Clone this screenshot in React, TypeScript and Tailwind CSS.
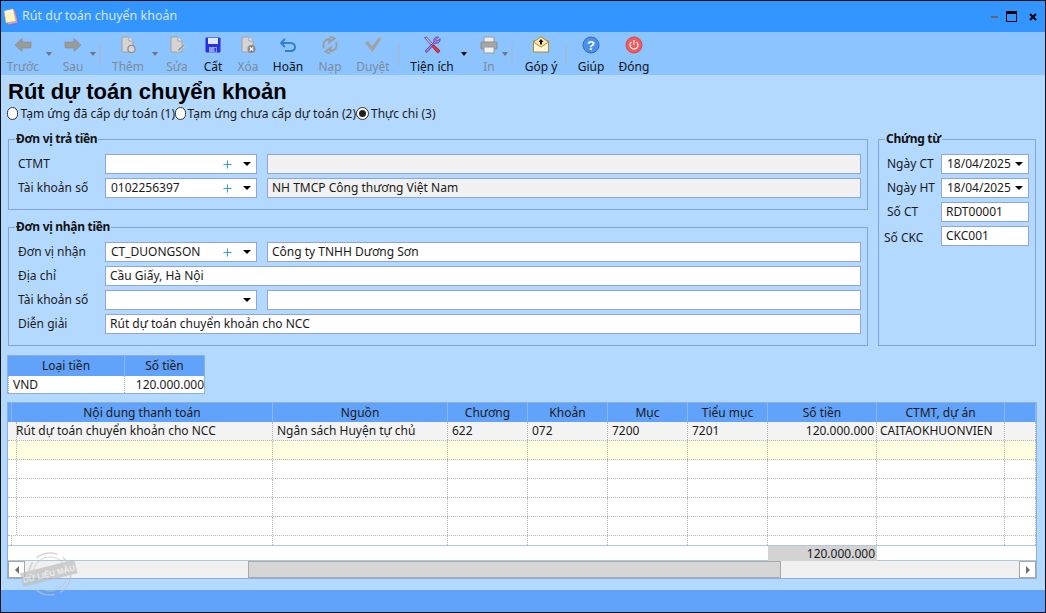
import type { ReactNode } from "react";

const inputBorder = "border border-[#8ea3e0]";

function ArrowIcon({ right }: { right?: boolean }) {
  return (
    <svg width="18" height="16" viewBox="0 0 18 16" className={right ? "-scale-x-100" : ""}>
      <path d="M1 8 L8 1.5 V5 H17 V11 H8 V14.5 Z" fill="#9a9a9a" stroke="#8a8a8a" strokeWidth="0.6" />
    </svg>
  );
}

function DocIcon({ badge }: { badge: "add" | "edit" | "del" }) {
  return (
    <svg width="18" height="18" viewBox="0 0 18 18">
      <path d="M3 1 H10 L14 5 V16 H3 Z" fill="#d4d4d4" stroke="#a0a0a0" />
      <path d="M10 1 V5 H14" fill="#f2f2f2" stroke="#a0a0a0" />
      {badge === "add" && <circle cx="12.5" cy="13" r="3.6" fill="#d9d9d9" stroke="#8f8f8f" strokeWidth="1.4" />}
      {badge === "edit" && <path d="M9 16 L10 13 L16 7.5 L17.5 9 L12 14.6 Z" fill="#9a9a9a" stroke="#f4f4f4" strokeWidth="0.5" />}
      {badge === "del" && (
        <g>
          <circle cx="12.5" cy="13" r="4" fill="#8a8a8a" />
          <path d="M10.8 11.3 L14.2 14.7 M14.2 11.3 L10.8 14.7" stroke="#fff" strokeWidth="1.2" />
        </g>
      )}
    </svg>
  );
}

function SaveIcon() {
  return (
    <svg width="16" height="16" viewBox="0 0 16 16">
      <rect x="0.5" y="0.5" width="15" height="15" rx="1" fill="#2a33d8" />
      <rect x="3" y="1" width="10" height="6" fill="#dfe6fb" />
      <rect x="4" y="10" width="8" height="5.5" fill="#8d9bf0" />
      <rect x="9.5" y="11" width="1.6" height="3.5" fill="#2a33d8" />
    </svg>
  );
}

function UndoIcon() {
  return (
    <svg width="18" height="16" viewBox="0 0 18 16" fill="none">
      <path d="M6 2 L2 6 L6 10" stroke="#2f7fd6" strokeWidth="1.8" />
      <path d="M2.5 6 H11.5 C14.5 6 16 8 16 10 C16 12.5 14 14 11.5 14 H6" stroke="#2f7fd6" strokeWidth="2" />
    </svg>
  );
}

function ReloadIcon() {
  return (
    <svg width="18" height="18" viewBox="0 0 18 18" fill="none">
      <path d="M3 12 C1 7 4 3 9 3 L8 6.5 L13.5 2.5 L8.5 0" stroke="#9c9c9c" strokeWidth="1.8" />
      <path d="M15 6 C17 11 14 15 9 15 L10 11.5 L4.5 15.5 L9.5 18" stroke="#9c9c9c" strokeWidth="1.8" />
    </svg>
  );
}

function CheckIcon() {
  return (
    <svg width="18" height="16" viewBox="0 0 18 16">
      <path d="M1 6 L4 4 L8 9 L15 0.5 L17.5 1.5 L8.5 15 Z" fill="#a2a2a2" />
    </svg>
  );
}

function ToolsIcon() {
  return (
    <svg width="18" height="18" viewBox="0 0 18 18">
      <path d="M2 15 L11 6 C10 3 12 0.5 15.5 1 L13 3.5 L14.5 5 L17 2.5 C17.5 6 15 8 12 7 L4 16.5 Z" fill="#a57be0" stroke="#5b3a9a" strokeWidth="0.8" />
      <path d="M1.5 1.5 L3.5 1 L9.5 7.5 L8 9 Z" fill="#c9b8ee" stroke="#5b3a9a" strokeWidth="0.8" />
      <path d="M9 10.5 L11 9 L16.5 14 C17.5 15.5 15.5 17.5 14 16.5 Z" fill="#e0343c" stroke="#8e1a20" strokeWidth="0.6" />
    </svg>
  );
}

function PrinterIcon() {
  return (
    <svg width="18" height="18" viewBox="0 0 18 18">
      <rect x="4" y="1" width="10" height="6" fill="#ececec" stroke="#9a9a9a" />
      <rect x="1" y="6" width="16" height="7" rx="1" fill="#a6a6a6" stroke="#8d8d8d" />
      <rect x="4" y="11" width="10" height="6" fill="#f1f1f1" stroke="#9a9a9a" />
    </svg>
  );
}

function MailIcon() {
  return (
    <svg width="18" height="18" viewBox="0 0 18 18">
      <rect x="1.5" y="5" width="15" height="11" fill="#fff6dc" stroke="#b08a2e" />
      <path d="M1.5 6 L9 0.8 L16.5 6 L9 11 Z" fill="#ffe9a8" stroke="#b08a2e" />
      <path d="M9 3 L11.5 6 H10 V8.5 H8 V6 H6.5 Z" fill="#111" />
    </svg>
  );
}

function HelpIcon() {
  return (
    <svg width="18" height="18" viewBox="0 0 18 18">
      <circle cx="9" cy="9" r="8" fill="#4a90e8" stroke="#2f6fc4" />
      <text x="9" y="13.5" textAnchor="middle" fontSize="13" fontWeight="700" fill="#fff" fontFamily="Liberation Sans, sans-serif">?</text>
    </svg>
  );
}

function PowerIcon() {
  return (
    <svg width="18" height="18" viewBox="0 0 18 18" fill="none">
      <circle cx="9" cy="9" r="8" fill="#ee5c5f" stroke="#d9474c" />
      <path d="M6.4 6 A4 4 0 1 0 11.6 6" stroke="#fff" strokeWidth="1.1" />
      <path d="M9 4 V9" stroke="#fff" strokeWidth="1.1" />
    </svg>
  );
}

function Tool({ label, icon, w, off }: { label: string; icon: ReactNode; w: string; off?: boolean }) {
  return (
    <div className={`flex flex-col items-center ${w}`}>
      <div className="flex h-[20px] items-center justify-center">{icon}</div>
      <span className={`mt-[4px] whitespace-nowrap text-[12px] leading-[16px] ${off ? "text-[#7f8b98]" : "text-[#111]"}`}>
        {label}
      </span>
    </div>
  );
}

function ToolCaret({ w, dark }: { w: string; dark?: boolean }) {
  return (
    <div className={`flex justify-center pt-[17px] ${w}`}>
      <div className={`h-0 w-0 shrink-0 border-x-[3.5px] border-t-[4px] border-x-transparent ${dark ? "border-t-black" : "border-t-[#6d7681]"}`} />
    </div>
  );
}

function ToolSep({ w }: { w: string }) {
  return (
    <div className={`flex justify-center pt-[9px] ${w}`}>
      <div className="h-[22px] w-[1.5px] bg-[#9fbcdc]" />
    </div>
  );
}

function Toolbar() {
  return (
    <div className="flex h-[43px] shrink-0 bg-[#8cc4ff] pl-[4px] pt-[3px]">
      <Tool label="Trước" w="w-[36px]" off icon={<ArrowIcon />} />
      <ToolCaret w="w-[16px]" />
      <Tool label="Sau" w="w-[32px]" off icon={<ArrowIcon right />} />
      <ToolCaret w="w-[7px]" />
      <ToolSep w="w-[8px]" />
      <Tool label="Thêm" w="w-[48px]" off icon={<DocIcon badge="add" />} />
      <ToolCaret w="w-[6px]" />
      <Tool label="Sửa" w="w-[38px]" off icon={<DocIcon badge="edit" />} />
      <Tool label="Cất" w="w-[34px]" icon={<SaveIcon />} />
      <Tool label="Xóa" w="w-[36px]" off icon={<DocIcon badge="del" />} />
      <Tool label="Hoãn" w="w-[44px]" icon={<UndoIcon />} />
      <Tool label="Nạp" w="w-[40px]" off icon={<ReloadIcon />} />
      <Tool label="Duyệt" w="w-[46px]" off icon={<CheckIcon />} />
      <ToolSep w="w-[6px]" />
      <Tool label="Tiện ích" w="w-[60px]" icon={<ToolsIcon />} />
      <ToolCaret w="w-[4px]" dark />
      <ToolSep w="w-[9px]" />
      <Tool label="In" w="w-[28px]" off icon={<PrinterIcon />} />
      <ToolCaret w="w-[4px]" />
      <ToolSep w="w-[10px]" />
      <Tool label="Góp ý" w="w-[48px]" icon={<MailIcon />} />
      <ToolSep w="w-[2px]" />
      <Tool label="Giúp" w="w-[48px]" icon={<HelpIcon />} />
      <Tool label="Đóng" w="w-[38px]" icon={<PowerIcon />} />
    </div>
  );
}

function TitleBar() {
  return (
    <div className="flex h-[31px] shrink-0 items-center bg-[#3395ff] pl-[2px]">
      <svg width="16" height="18" viewBox="0 0 16 18" className="mr-[3px]">
        <path d="M2 4 L12 2 L15 15 L5 17 Z" fill="#b9a2e6" stroke="#7d63b8" strokeWidth="0.6" />
        <path d="M1 3 L10 1 L13 13 L3 15 Z" fill="#fff4c2" stroke="#c9a95a" strokeWidth="0.6" />
        <path d="M2 3 L10 1.3 L10.6 3.6 L2.6 5.4 Z" fill="#f5f5f5" />
      </svg>
      <span className="text-[12.5px] text-[#d5e8ff]">Rút dự toán chuyển khoản</span>
      <div className="ml-auto flex items-center">
        <div className="mr-[8px] h-[2px] w-[7px] bg-[#5f6670]" />
        <div className="mr-[12px] h-[11px] w-[11px] border border-t-[3px] border-black" />
        <svg width="8" height="8" viewBox="0 0 8 8" className="mr-[8px]">
          <path d="M1 1 L7 7 M7 1 L1 7" stroke="#000" strokeWidth="2" />
        </svg>
      </div>
    </div>
  );
}

function Radio({ label, checked, w }: { label: string; checked?: boolean; w: string }) {
  return (
    <div className={`flex items-center ${w}`}>
      <div className="flex h-[13px] w-[13px] items-center justify-center rounded-full border border-[#333] bg-white">
        {checked && <div className="h-[7px] w-[7px] rounded-full bg-[#222]" />}
      </div>
      <span className="ml-[2px] whitespace-nowrap text-[12px] text-[#1a1a1a]">{label}</span>
    </div>
  );
}

function Group({ title, children, className }: { title: string; children: ReactNode; className?: string }) {
  return (
    <fieldset className={`border border-[#85a3d9] pb-[11px] pt-[8px] ${className ?? ""}`}>
      <legend className="ml-[6px] h-[14px] px-[1px] text-[12px] font-bold leading-[14px] tracking-[-0.3px] text-[#111]">
        {title}
      </legend>
      {children}
    </fieldset>
  );
}

function Field({ value, off }: { value?: string; off?: boolean }) {
  return (
    <div className={`flex h-[20px] items-center truncate px-[4px] text-[12px] text-[#1a1a1a] ${inputBorder} ${off ? "bg-[#f1f1f1]" : "bg-white"}`}>
      {value}
    </div>
  );
}

function BlackCaret() {
  return <div className="h-0 w-0 shrink-0 border-x-[4px] border-t-[4px] border-x-transparent border-t-black" />;
}

function Combo({ value, plus }: { value?: string; plus?: boolean }) {
  return (
    <div className={`flex h-[20px] items-center bg-white pl-[5px] text-[12px] text-[#1a1a1a] ${inputBorder}`}>
      <span className="flex-1 truncate">{value}</span>
      {plus && (
        <svg width="9" height="9" viewBox="0 0 9 9" className="mr-[11px]">
          <path d="M4.5 0.5 V8.5 M0.5 4.5 H8.5" stroke="#3d9be0" strokeWidth="1" />
        </svg>
      )}
      <div className="mr-[5px]">
        <BlackCaret />
      </div>
    </div>
  );
}

function FormRow({ label, children }: { label: string; children: ReactNode }) {
  return (
    <>
      <span className="whitespace-nowrap pl-[9px] text-[12px] leading-[20px] text-[#1a1a1a]">{label}</span>
      {children}
    </>
  );
}

function Forms() {
  return (
    <div className="flex gap-[10px] pl-[7px] pt-[10px]">
      <div className="flex w-[860px] flex-col gap-[10px]">
        <Group title="Đơn vị trả tiền">
          <div className="grid grid-cols-[86px_152px_1fr] gap-x-[10px] gap-y-[4px] pr-[6px]">
            <FormRow label="CTMT">
              <Combo plus />
              <Field off />
            </FormRow>
            <FormRow label="Tài khoản số">
              <Combo value="0102256397" plus />
              <Field off value="NH TMCP Công thương Việt Nam" />
            </FormRow>
          </div>
        </Group>
        <Group title="Đơn vị nhận tiền">
          <div className="grid grid-cols-[86px_152px_1fr] gap-x-[10px] gap-y-[4px] pr-[6px]">
            <FormRow label="Đơn vị nhận">
              <Combo value="CT_DUONGSON" plus />
              <Field value="Công ty TNHH Dương Sơn" />
            </FormRow>
            <FormRow label="Địa chỉ">
              <div className="col-span-2">
                <Field value="Cầu Giấy, Hà Nội" />
              </div>
            </FormRow>
            <FormRow label="Tài khoản số">
              <Combo />
              <Field />
            </FormRow>
            <FormRow label="Diễn giải">
              <div className="col-span-2">
                <Field value="Rút dự toán chuyển khoản cho NCC" />
              </div>
            </FormRow>
          </div>
        </Group>
      </div>
      <Group title="Chứng từ" className="w-[158px]">
        <div className="grid grid-cols-[62px_88px] gap-y-[4px]">
          <span className="pl-[8px] text-[12px] leading-[20px] text-[#1a1a1a]">Ngày CT</span>
          <Combo value="18/04/2025" />
          <span className="pl-[8px] text-[12px] leading-[20px] text-[#1a1a1a]">Ngày HT</span>
          <Combo value="18/04/2025" />
          <span className="pl-[8px] text-[12px] leading-[20px] text-[#1a1a1a]">Số CT</span>
          <Field value="RDT00001" />
          <span className="pl-[5px] pt-[2px] text-[12px] leading-[20px] text-[#1a1a1a]">Số CKC</span>
          <Field value="CKC001" />
        </div>
      </Group>
    </div>
  );
}

function CurrencyTable() {
  return (
    <div className="ml-[6px] mt-[9px] w-[198px] border border-[#8fb0dc] bg-white text-[12px] text-[#1a1a1a]">
      <div className="grid h-[20px] grid-cols-[117px_1fr] bg-[#61a3fb] leading-[20px] text-center">
        <span className="border-r border-[#86b8f5]">Loại tiền</span>
        <span>Số tiền</span>
      </div>
      <div className="grid h-[17px] grid-cols-[117px_1fr] leading-[17px]">
        <span className="border-l border-r border-dotted border-[#aaa] pl-[4px]">VND</span>
        <span className="text-right">120.000.000</span>
      </div>
    </div>
  );
}

const gridCols = "grid grid-cols-[4px_261px_175px_80px_80px_80px_80px_109px_128px_31px]";

const headers = ["", "Nội dung thanh toán", "Nguồn", "Chương", "Khoản", "Mục", "Tiểu mục", "Số tiền", "CTMT, dự án", ""];

const dataRow = [
  "",
  "Rút dự toán chuyển khoản cho NCC",
  "Ngân sách Huyện tự chủ",
  "622",
  "072",
  "7200",
  "7201",
  "120.000.000",
  "CAITAOKHUONVIEN",
  "",
];

function GridRow({ cells, bg, h }: { cells: string[]; bg: string; h: string }) {
  return (
    <div className={`${gridCols} ${bg} ${h} border-b border-dotted border-[#b5b5b5]`}>
      {cells.map((c, i) => (
        <div
          key={i}
          className={`truncate border-r border-dotted border-[#b5b5b5] px-[4px] leading-[18px] ${i === 7 ? "pr-[2px] text-right" : ""} ${i === 8 ? "pl-[3px]" : ""}`}
        >
          {c}
        </div>
      ))}
    </div>
  );
}

function ScrollButton({ right }: { right?: boolean }) {
  return (
    <div className="flex w-[17px] shrink-0 items-center justify-center border border-[#a8a8a8] bg-white">
      <div
        className={`h-0 w-0 border-y-[4px] border-y-transparent ${right ? "border-l-[4px] border-l-[#707070]" : "border-r-[4px] border-r-[#707070]"}`}
      />
    </div>
  );
}

function PaymentGrid() {
  const empty = headers.map(() => "");
  return (
    <div className="ml-[6px] mt-[8px] h-[177px] w-[1030px] border border-[#8fb0dc] bg-white text-[12px] text-[#1a1a1a]">
      <div className={`${gridCols} h-[19px] bg-[#61a3fb]`}>
        {headers.map((h, i) => (
          <div key={i} className="truncate border-r border-[#86b8f5] text-center leading-[20px]">
            {h}
          </div>
        ))}
      </div>
      <GridRow cells={dataRow} bg="bg-[#f3f3f3]" h="h-[19px]" />
      <GridRow cells={empty} bg="bg-[#fefde0]" h="h-[19px]" />
      <GridRow cells={empty} bg="bg-white" h="h-[19px]" />
      <GridRow cells={empty} bg="bg-white" h="h-[19px]" />
      <GridRow cells={empty} bg="bg-white" h="h-[19px]" />
      <GridRow cells={empty} bg="bg-white" h="h-[19px]" />
      <div className={`${gridCols} h-[10px] border-b border-[#b4c6dc]`}>
        {empty.map((_, i) => (
          <div key={i} className="border-r border-dotted border-[#b5b5b5]" />
        ))}
      </div>
      <div className={`${gridCols} h-[15px] border-b border-[#b4c6dc]`}>
        <div className="col-span-7" />
        <div className="bg-[#d3d3d3] pr-[2px] text-right leading-[15px]">120.000.000</div>
      </div>
      <div className="flex h-[17px] bg-[#f0f0f0]">
        <ScrollButton />
        <div className="flex-1 pl-[223px]">
          <div className="h-full w-[533px] border border-[#a8a8a8] bg-[#d6d6d6]" />
        </div>
        <ScrollButton right />
      </div>
    </div>
  );
}

function Stamp() {
  return (
    <svg width="60" height="48" viewBox="0 0 60 48" className="absolute left-[19px] top-[549px] opacity-70">
      <g fill="none" stroke="#c4c4c4">
        <circle cx="30" cy="24" r="21" strokeWidth="1.4" strokeDasharray="22 6" />
        <circle cx="30" cy="24" r="17" strokeWidth="1" />
      </g>
      <g transform="rotate(-14 30 24)">
        <rect x="1" y="16" width="56" height="14" fill="#bdbdbd" />
        <text x="29" y="26.5" textAnchor="middle" fontSize="8" fontWeight="700" fill="#ececec" fontFamily="Liberation Sans, sans-serif">
          DỮ LIỆU MẪU
        </text>
      </g>
    </svg>
  );
}

export default function App() {
  return (
    <div className="relative flex h-[613px] w-[1046px] flex-col overflow-hidden border border-[#111] bg-[#b4d9ff] font-['Noto_Sans',sans-serif]">
      <TitleBar />
      <Toolbar />
      <div className="flex-1">
        <h1 className="pl-[7px] pt-[4px] font-['Liberation_Sans',sans-serif] text-[22px] font-bold leading-[25px] text-black">
          Rút dự toán chuyển khoản
        </h1>
        <div className="flex pl-[6px] pt-[1px] leading-[17px]">
          <Radio label="Tạm ứng đã cấp dự toán (1)" w="w-[168px]" />
          <Radio label="Tạm ứng chưa cấp dự toán (2)" w="w-[181px]" />
          <Radio label="Thực chi (3)" checked w="w-[100px]" />
        </div>
        <Forms />
        <CurrencyTable />
        <PaymentGrid />
      </div>
      <div className="h-[22px] shrink-0 bg-[#61a3fb]" />
      <Stamp />
    </div>
  );
}
